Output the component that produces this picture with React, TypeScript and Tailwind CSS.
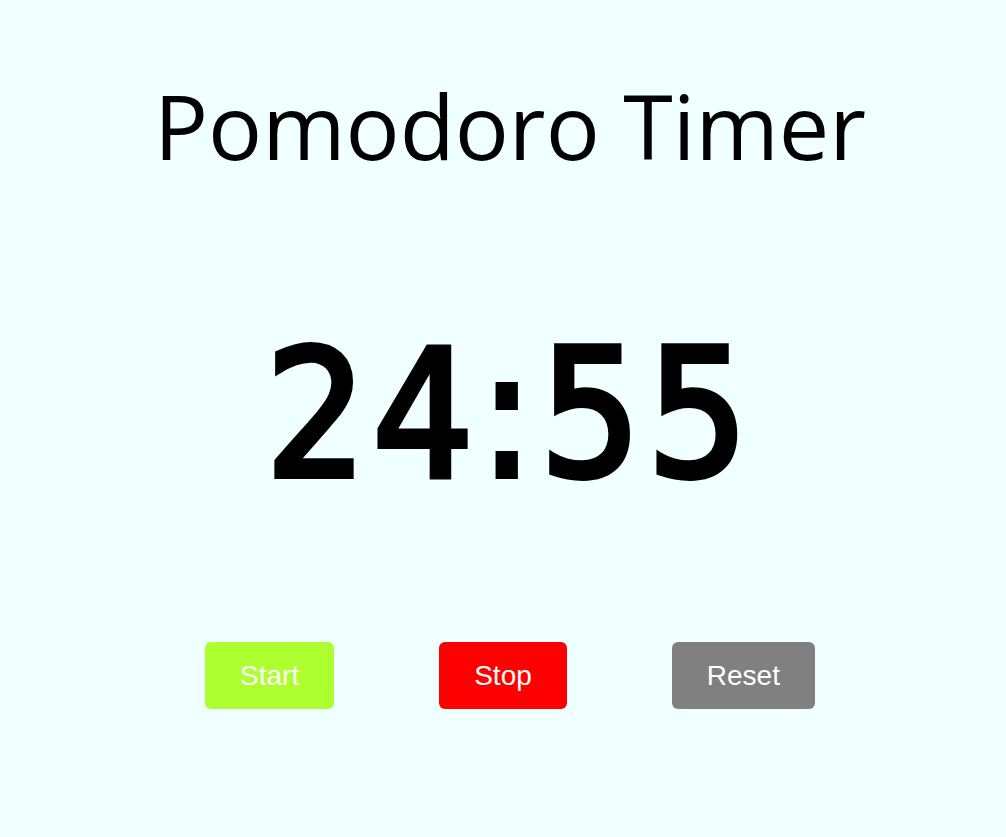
import React from "react";

export default function App() {
  return (
    <div
      className="min-h-screen w-full bg-[#f0ffff] flex flex-col items-center pl-[14px] text-black"
      style={{ fontFamily: '"DejaVu Sans Condensed", "DejaVu Sans", sans-serif' }}
    >
      <h1
        className="mt-[80px] text-[90px] leading-[90px] font-normal whitespace-nowrap"
        style={{ fontFamily: '"Open Sans", "Noto Sans", sans-serif' }}
      >
        Pomodoro Timer
      </h1>
      <div className="mt-[158px] text-[176px] leading-[176px] font-normal tracking-[6.5px] whitespace-nowrap [-webkit-text-stroke:6px_black]">
        24:55
      </div>
      <div
        className="mt-[138px] flex flex-row gap-[105px]"
        style={{ fontFamily: '"Liberation Sans", Arial, sans-serif' }}
      >
        <button className="h-[67px] px-[35px] rounded-md bg-[#adff2f] text-white text-[28px] leading-none flex items-center justify-center">
          Start
        </button>
        <button className="h-[67px] px-[35px] rounded-md bg-[#ff0000] text-white text-[28px] leading-none flex items-center justify-center">
          Stop
        </button>
        <button className="h-[67px] px-[35px] rounded-md bg-[#808080] text-white text-[28px] leading-none flex items-center justify-center">
          Reset
        </button>
      </div>
    </div>
  );
}
